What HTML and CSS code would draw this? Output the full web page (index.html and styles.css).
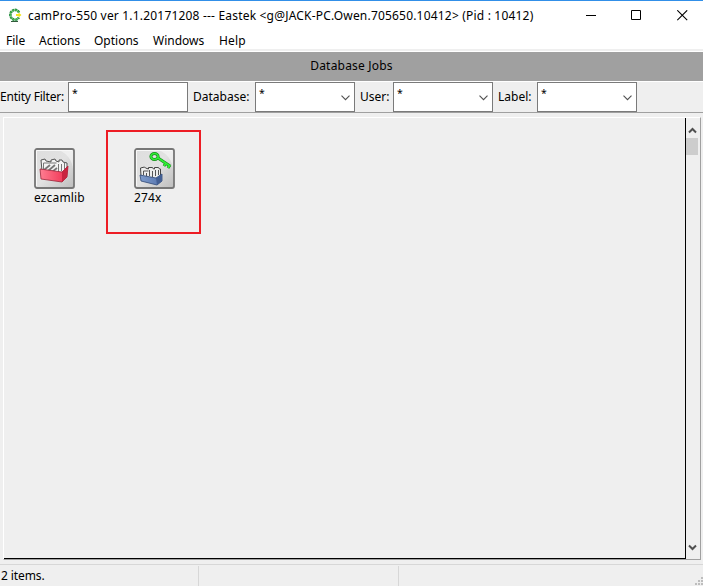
FILE: index.html
```html
<!DOCTYPE html>
<html lang="en">
<head>
<meta charset="utf-8">
<title>camPro-550</title>
<link rel="stylesheet" href="styles.css">
</head>
<body>
<div class="window">
  <header class="titlebar">
    <svg class="logo" width="14" height="15" viewBox="0 0 14 15"><path d="M11 4.5A4.6 4.9 0 1 0 10.8 9.5" fill="none" stroke="#1f8a3c" stroke-width="2.6" stroke-dasharray="2.2 .6"/><path d="M11 4.5A4.6 4.9 0 1 0 10.8 9.5" fill="none" stroke="#55bd58" stroke-width="1"/><path d="M3 13.5h7" stroke="#315b3b"/><path d="M8 6h2.5V4.5L13.5 7l-3 2.500V8H8z" fill="#f2e51c"/></svg>
    <h1 class="title">camPro-550 ver 1.1.20171208 --- Eastek &lt;g@JACK-PC.Owen.705650.10412&gt; (Pid : 10412)</h1>
    <div class="controls">
      <svg width="11" height="11" viewBox="0 0 11 11"><path d="M0 5.5h10" stroke="#000"/></svg>
      <svg width="11" height="11" viewBox="0 0 11 11"><path d="M.5.5h9v9h-9z" fill="none" stroke="#000"/></svg>
      <svg width="11" height="11" viewBox="0 0 11 11"><path d="M.3.3l9.9 9.9M10.2.3L.3 10.2" stroke="#000" stroke-width="1.1"/></svg>
    </div>
  </header>
  <nav class="menu"><span class="m-file">File</span><span class="m-actions">Actions</span><span class="m-options">Options</span><span class="m-windows">Windows</span><span class="m-help">Help</span></nav>
  <div class="banner"><span>Database Jobs</span></div>
  <div class="filters">
    <label class="l-entity">Entity Filter:</label><div class="field wide">*</div>
    <label class="l-database">Database:</label><div class="field">*<svg class="chev" width="9" height="6" viewBox="0 0 9 6"><path d="M.5.7l4 4 4-4" fill="none" stroke="#505050" stroke-width="1.1"/></svg></div>
    <label class="l-user">User:</label><div class="field">*<svg class="chev" width="9" height="6" viewBox="0 0 9 6"><path d="M.5.7l4 4 4-4" fill="none" stroke="#505050" stroke-width="1.1"/></svg></div>
    <label class="l-label">Label:</label><div class="field">*<svg class="chev" width="9" height="6" viewBox="0 0 9 6"><path d="M.5.7l4 4 4-4" fill="none" stroke="#505050" stroke-width="1.1"/></svg></div>
  </div>
  <main class="panel">
    <div class="canvas">
      <div class="job">
        <svg width="41" height="41" viewBox="0 0 41 41">
          <defs>
            <linearGradient id="tile" x1="0" y1="0" x2="1" y2="1"><stop offset="0" stop-color="#dedede"/><stop offset=".5" stop-color="#e2e2e2"/><stop offset="1" stop-color="#bdbdbd"/></linearGradient>
            <linearGradient id="red"><stop offset="0" stop-color="#ff7d91"/><stop offset="1" stop-color="#ee2e4f"/></linearGradient>
            <linearGradient id="blue"><stop offset="0" stop-color="#7d9bcc"/><stop offset="1" stop-color="#5674ad"/></linearGradient>
          </defs>
          <rect x="1" y="1" width="39" height="39" rx="2" fill="url(#tile)" stroke="#777" stroke-width="1.8"/>
          <path d="M25 2Q38 8 39 22V2z" fill="#fff" opacity=".45"/><path d="M2.500 38V2.5H38" fill="none" stroke="#f8f8f8"/>
          <path d="M8 23L7 12l4-1 1 2 5 1v-2l4-1 1 2 3 1v-2h3l1 2 4 1v9l-6 3z" fill="#f4f4f4" stroke="#555"/>
          <path d="M9.500 21V15h13" fill="none" stroke="#777"/>
          <path d="M10 22l6-5M14 23l7-6M18 24l5-4" stroke="#777" stroke-width="1.8"/>
          <path d="M24.500 24v-8M27.500 23v-7M30.500 22v-7" stroke="#777"/>
          <path d="M6 21l22 3 6-6-1 11-5 5L7 31z" fill="url(#red)" stroke="#9b2539" stroke-width=".8"/><path d="M28 24l6-6-1 11-5 5z" fill="#c9243f"/>
        </svg>
        <span class="name-one">ezcamlib</span>
      </div>
      <div class="job selected">
        <svg width="41" height="41" viewBox="0 0 41 41">
          <rect x="1" y="1" width="39" height="39" rx="2" fill="url(#tile)" stroke="#777" stroke-width="1.8"/>
          <path d="M25 2Q38 8 39 22V2z" fill="#fff" opacity=".45"/><path d="M2.500 38V2.5H38" fill="none" stroke="#f8f8f8"/>
          <path d="M7 28l-.5-8 4-1 1 1 3 1v-1.500h4l1 1.500 1 0v-1.500h4l1 1.500 1 0v7l-4 3z" fill="#ededed" stroke="#444"/>
          <path d="M9.500 27v-4h5M12.500 28v-3M15.500 28v-6M18.500 29v-6M21.500 28v-6M24.500 27v-5" fill="none" stroke="#555"/>
          <path d="M6 27l16 3 6-4v7l-5 4-16-4z" fill="url(#blue)" stroke="#2e4775" stroke-width=".8"/><path d="M22 30l6-4v7l-5 4z" fill="#435f94"/>
          <g fill="none" stroke="#168a1b" stroke-width="3"><ellipse cx="20.5" cy="8.5" rx="3.6" ry="3"/><path d="M24 10l12 8M32 15l-2 3M36 17l-2 3"/></g>
          <g fill="none" stroke="#30ef35" stroke-width="1.7"><ellipse cx="20.5" cy="8.5" rx="3.6" ry="3"/><path d="M24 10l12 8M32 15l-2 3M36 17l-2 3"/></g>
        </svg>
        <span class="name-two">274x</span>
      </div>
    </div>
    <div class="scroll">
      <svg width="9" height="7" viewBox="0 0 9 7"><path d="M1 5.5l3.5-3.5L8 5.5" fill="none" stroke="#505050" stroke-width="2"/></svg>
      <div class="thumb"></div>
      <svg class="down" width="9" height="7" viewBox="0 0 9 7"><path d="M1 1.5L4.5 5 8 1.5" fill="none" stroke="#505050" stroke-width="2"/></svg>
    </div>
  </main>
  <footer class="status">
    <div class="cell"><span>2 items.</span></div><div class="cell second"></div>
    <svg class="grip" width="8" height="8" viewBox="0 0 8 8"><path d="M6 0h2v2H6zM3 3h2v2H3zM6 3h2v2H6zM0 6h2v2H0zM3 6h2v2H3zM6 6h2v2H6z" fill="#bdbdbd"/></svg>
  </footer>
</div>
</body>
</html>
```
FILE: styles.css
```css
* { box-sizing: border-box; }
body { margin: 0; background: #efefef; color: #000; font: 12px/16px "Noto Sans", "Open Sans", sans-serif; overflow: hidden; }
svg { display: block; flex: none; }
.window { width: 703px; height: 586px; display: flex; flex-direction: column; white-space: nowrap; }
.titlebar { height: 30px; border-top: 1px solid #318fe8; background: #fff; display: flex; padding-left: 8px; }
.logo { margin-top: 7px; }
.title { margin: 7px 0 0 6px; font-size: 12px; line-height: 16px; font-weight: 400; letter-spacing: .19px; flex: 1; }
.controls { display: flex; margin: 9px 15px 0 0; }
.controls svg { margin-left: 35px; }
.controls svg:nth-child(2) { margin-left: 34px; }
.menu { height: 21px; background: #fff; border-bottom: 2px solid #efefef; display: flex; gap: 14px; padding: 3px 0 0 6px; }
.m-file { width: 19px; }
.m-actions { width: 41px; }
.m-options { width: 45px; }
.m-windows { width: 52px; }
.m-help { letter-spacing: .2px; }
.banner { height: 31px; background: #a0a0a0; border-top: 1px solid #fff; border-bottom: 1px solid #fff; text-align: center; padding-top: 6px; letter-spacing: .2px; }
.filters { height: 31px; border-bottom: 1px solid #a0a0a0; display: flex; }
.filters label { padding-top: 7px; flex: none; }
.l-entity { width: 68px; letter-spacing: -.2px; }
.l-database { width: 67px; padding-left: 5px; }
.l-user { width: 38px; padding-left: 5px; }
.l-label { width: 44px; padding-left: 5px; }
.field { width: 100px; height: 30px; background: #fff; border: 1px solid #7a7a7a; padding: 2px 4px 0 3px; display: flex; justify-content: space-between; font-size: 10.5px; }
.wide { width: 120px; }
.chev { margin-top: 10px; }
.panel { margin: 4px 2px 0 3px; height: 443px; border: 1px solid #fff; border-right-color: #a0a0a0; border-bottom-color: #a0a0a0; display: flex; }
.canvas { flex: 1; border-right: 1px solid #000; border-bottom: 1px solid #000; display: flex; align-items: flex-start; padding: 12px 0 0 10px; }
.job { width: 92px; height: 104px; padding: 18px 0 0 20px; line-height: 17px; letter-spacing: .15px; }
.selected { width: 95px; border: 2px solid #ed1c24; padding: 16px 0 0 26px; }
.scroll { width: 14px; padding: 9px 2px 8px 0; display: flex; flex-direction: column; align-items: center; }
.thumb { width: 12px; height: 17px; background: #cdcdcd; margin-top: 4px; }
.down { margin-top: auto; margin-bottom: 0; }
.status { margin-top: 4px; height: 22px; border-top: 1px solid #d7d7d7; display: flex; padding-top: 1px; position: relative; }
.cell { width: 199px; border-right: 1px solid #d7d7d7; padding: 2px 0 0 1px; letter-spacing: -.1px; }
.second { width: 200px; }
.grip { position: absolute; right: 0; bottom: 1px; }
```
